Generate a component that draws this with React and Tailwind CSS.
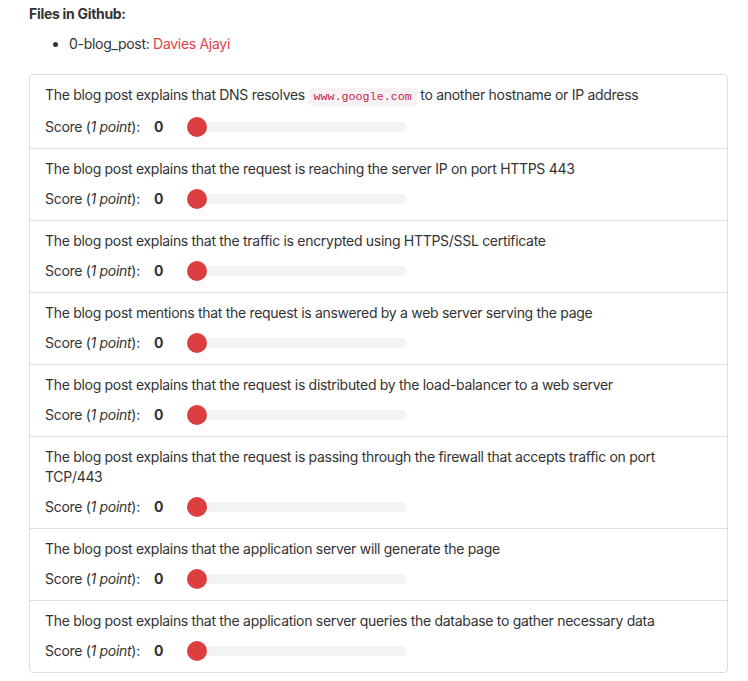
import React, { useState } from 'react';

const checks = [
  { text: <>The blog post explains that DNS resolves <code className="rounded bg-[#f9f2f4] px-[5px] py-[2px] font-['Liberation_Mono',monospace] text-[11.7px] tracking-normal text-[#c7254e]">www.google.com</code> to another hostname or IP address</> },
  { text: 'The blog post explains that the request is reaching the server IP on port HTTPS 443' },
  { text: 'The blog post explains that the traffic is encrypted using HTTPS/SSL certificate' },
  { text: 'The blog post mentions that the request is answered by a web server serving the page' },
  { text: 'The blog post explains that the request is distributed by the load-balancer to a web server' },
  { text: 'The blog post explains that the request is passing through the firewall that accepts traffic on port TCP/443' },
  { text: 'The blog post explains that the application server will generate the page' },
  { text: 'The blog post explains that the application server queries the database to gather necessary data' },
];

const ScoreRow = () => {
  const [score] = useState(0);
  return (
    <div className="mt-[10px] flex h-5 items-center">
      <span className="w-[109px]">
        Score (<i>1 point</i>):
      </span>
      <b className="w-[33px] font-bold">{score}</b>
      <div className="relative h-[10px] w-[220px] rounded-full bg-[#f3f3f3]">
        <div className="absolute left-0 top-1/2 h-5 w-5 -translate-y-1/2 rounded-full bg-[#dc3e40]" />
      </div>
    </div>
  );
};

export default function App() {
  return (
    <div className="min-h-[681px] bg-white pl-[29px] pr-[20px] pt-[4px] font-['Inter',sans-serif] text-[14px] leading-5 tracking-[-0.3px] text-[#333]">
      <h4 className="font-bold">Files in Github:</h4>
      <ul className="mt-[10px] list-disc pl-[40px]">
        <li>
          0-blog_post: <span className="text-[#e2434b]">Davies Ajayi</span>
        </li>
      </ul>
      <div className="mt-[20px] overflow-hidden rounded border border-[#ddd]">
        {checks.map((c, i) => (
          <div key={i} className={`px-[15px] pb-[11px] pt-[10px] ${i > 0 ? 'border-t border-[#ddd]' : ''}`}>
            <div className="pr-[20px]">{c.text}</div>
            <ScoreRow />
          </div>
        ))}
      </div>
    </div>
  );
}
